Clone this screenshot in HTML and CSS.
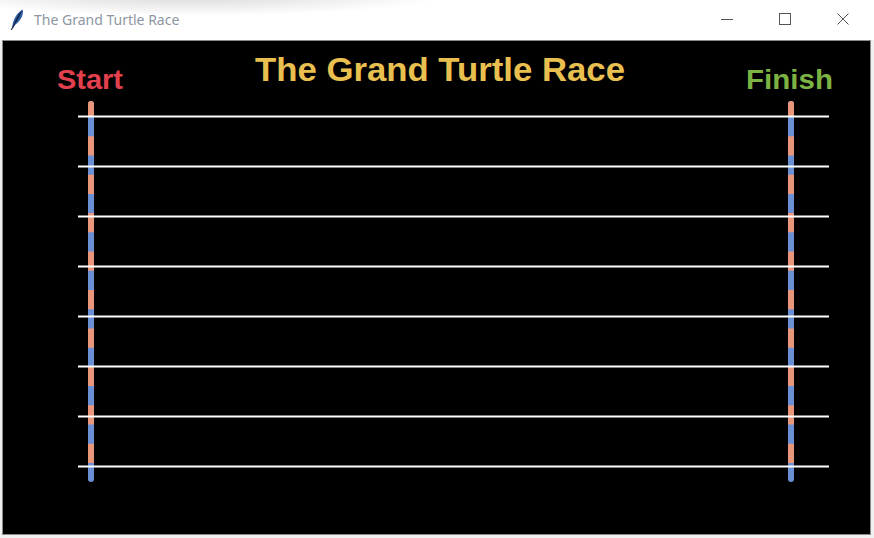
FILE: index.html
```html
<!DOCTYPE html>
<html lang="en">
<head>
<meta charset="utf-8">
<title>The Grand Turtle Race</title>
<link rel="stylesheet" href="styles.css">
</head>
<body>
<div class="window">
  <header class="titlebar">
    <svg class="app-icon" width="16" height="22" viewBox="0 0 16 22">
      <path d="M2.5 20.5 C2 15 5 6 12.5 1.5 C14 5 12 12 5 17 Z" fill="#2e5fa8"/>
      <path d="M3 20 C4 14 7 8 12.5 1.5 C11 6 8 12 4.5 17 Z" fill="#14284a"/>
      <path d="M1.5 21.5 L4 17" stroke="#14284a" stroke-width="1.2" stroke-linecap="round"/>
    </svg>
    <span class="title">The Grand Turtle Race</span>
    <div class="controls">
      <div class="ctl">
        <svg width="12" height="12" viewBox="0 0 12 12"><path d="M0 6.5 H12" stroke="#555" stroke-width="1"/></svg>
      </div>
      <div class="ctl">
        <svg width="12" height="12" viewBox="0 0 12 12"><rect x="0.5" y="0.5" width="11" height="11" fill="none" stroke="#555" stroke-width="1"/></svg>
      </div>
      <div class="ctl">
        <svg width="12" height="12" viewBox="0 0 12 12"><path d="M0.5 0.5 L11.5 11.5 M11.5 0.5 L0.5 11.5" stroke="#555" stroke-width="1"/></svg>
      </div>
    </div>
  </header>
  <main class="client">
    <svg class="canvas" width="867" height="493" viewBox="0 0 867 493">
      <text class="label start" x="87" y="48" text-anchor="middle" textLength="66" lengthAdjust="spacingAndGlyphs">Start</text>
      <text class="label heading" x="437" y="40" text-anchor="middle" textLength="370" lengthAdjust="spacingAndGlyphs">The Grand Turtle Race</text>
      <text class="label finish" x="786.5" y="48" text-anchor="middle" textLength="87" lengthAdjust="spacingAndGlyphs">Finish</text>

      <g class="pole">
        <line class="pole-blue" x1="88" y1="63" x2="88" y2="438"/>
        <circle class="pole-cap" cx="88" cy="63" r="3"/>
        <line class="pole-orange" x1="88" y1="63" x2="88" y2="76"/>
        <line class="pole-orange dashed" x1="88" y1="95.22" x2="88" y2="422"/>
      </g>
      <g class="pole">
        <line class="pole-blue" x1="788" y1="63" x2="788" y2="438"/>
        <circle class="pole-cap" cx="788" cy="63" r="3"/>
        <line class="pole-orange" x1="788" y1="63" x2="788" y2="76"/>
        <line class="pole-orange dashed" x1="788" y1="95.22" x2="788" y2="422"/>
      </g>

      <g class="lanes">
        <line x1="75" y1="75.5" x2="826" y2="75.5"/>
        <line x1="75" y1="125.5" x2="826" y2="125.5"/>
        <line x1="75" y1="175.5" x2="826" y2="175.5"/>
        <line x1="75" y1="225.5" x2="826" y2="225.5"/>
        <line x1="75" y1="275.5" x2="826" y2="275.5"/>
        <line x1="75" y1="325.5" x2="826" y2="325.5"/>
        <line x1="75" y1="375.5" x2="826" y2="375.5"/>
        <line x1="75" y1="425.5" x2="826" y2="425.5"/>
      </g>
    </svg>
  </main>
</div>
</body>
</html>
```

FILE: styles.css
```css
* { box-sizing: border-box; }

html, body {
  margin: 0;
  padding: 0;
  width: 874px;
  height: 538px;
  overflow: hidden;
  background: #ffffff;
}

.window {
  width: 874px;
  height: 538px;
  display: flex;
  flex-direction: column;
  background: #f0f0f0;
}

.titlebar {
  height: 40px;
  flex: 0 0 40px;
  display: flex;
  align-items: center;
  background:
    radial-gradient(ellipse 260px 22px at 190px -6px, rgba(0,0,0,0.16), rgba(0,0,0,0) 100%),
    #ffffff;
}

.app-icon {
  margin-left: 10px;
  margin-top: -2px;
  flex: 0 0 auto;
}

.title {
  margin-left: 8px;
  margin-top: -2px;
  font-family: "Segoe UI", "Noto Sans", "Open Sans", sans-serif;
  font-size: 14px;
  color: #8d96a3;
  white-space: nowrap;
}

.controls {
  margin-left: auto;
  margin-right: 2px;
  display: flex;
  height: 100%;
}

.ctl {
  width: 58px;
  height: 100%;
  display: flex;
  align-items: center;
  justify-content: center;
  padding-bottom: 2px;
}

.client {
  flex: 1 1 auto;
  display: flex;
  padding: 1px 4px 4px 3px;
  background: #f0f0f0;
}

.canvas {
  display: block;
  background: #000000;
  box-shadow: 0 0 0 1px #8a8a8a;
}

.label {
  font-family: "Liberation Sans", Arial, sans-serif;
  font-weight: bold;
}

.start { font-size: 28px; fill: #e2404f; }
.finish { font-size: 28px; fill: #7cb342; }
.heading { font-size: 32.5px; fill: #e9c050; }

.pole-blue {
  stroke: #6a8fd4;
  stroke-width: 6;
  stroke-linecap: round;
}

.pole-cap { fill: #e9967a; }

.pole-orange {
  stroke: #e9967a;
  stroke-width: 6;
  stroke-linecap: butt;
}

.dashed { stroke-dasharray: 19.22 19.22; }

.lanes line {
  stroke: #ffffff;
  stroke-width: 2;
}
```
